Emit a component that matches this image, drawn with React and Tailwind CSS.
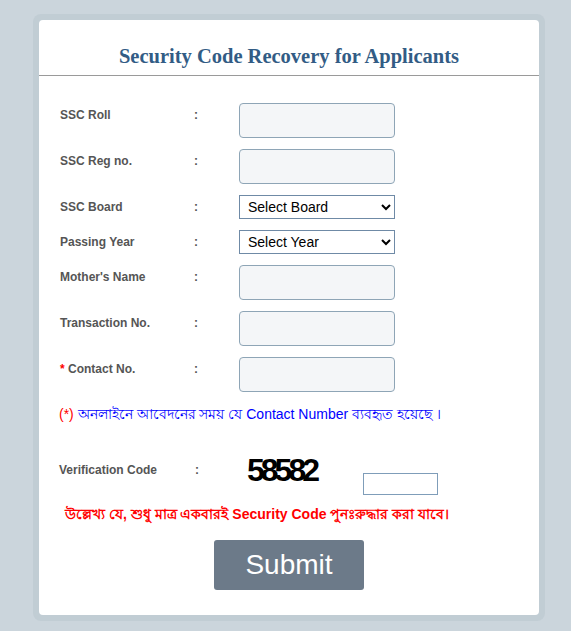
import React from "react";

const ROWS = [
  { label: "SSC Roll", type: "text" },
  { label: "SSC Reg no.", type: "text" },
  { label: "SSC Board", type: "select", placeholder: "Select Board" },
  { label: "Passing Year", type: "select", placeholder: "Select Year" },
  { label: "Mother's Name", type: "text" },
  { label: "Transaction No.", type: "text" },
  { label: "Contact No.", type: "text", required: true },
];

function Field({ row }) {
  if (row.type === "select") {
    return (
      <select className="w-[156px] h-6 border border-[#6f8aa6] bg-white text-[14px] text-black px-[4px] rounded-none">
        <option>{row.placeholder}</option>
      </select>
    );
  }
  return (
    <input
      type="text"
      className="w-[156px] h-[35px] rounded-[4px] border border-[#8ea5b6] bg-[#f4f6f8] px-2 text-sm outline-none"
    />
  );
}

export default function App() {
  return (
    <div
      className="min-h-screen bg-[#cbd5dc] pt-[14px] pl-[33px]"
      style={{ fontFamily: '"Liberation Sans", Arial, sans-serif' }}
    >
      <div className="w-[512px] h-[607px] rounded-lg bg-[#c1cdd4] p-[6px]">
        <div className="h-full rounded-[4px] bg-white">
          {/* titulo */}
          <div className="pt-[22px] pb-[5px] border-b border-[#9a9a9a] text-center">
            <h1
              className="text-[20.5px] leading-[28px] font-semibold text-[#325c85]"
              style={{ fontFamily: '"Liberation Serif", "DejaVu Serif", serif' }}
            >
              Security Code Recovery for Applicants
            </h1>
          </div>

          <div className="pt-[27px] pl-[21px]">
            <div className="flex flex-col gap-[11px]">
              {ROWS.map((r) => (
                <div key={r.label} className="flex items-start">
                  <div className="w-[134px] leading-6 text-[12px] font-bold text-[#555]">
                    {r.required && <span className="text-[#ff0000]">* </span>}
                    {r.label}
                  </div>
                  <div className="w-[45px] leading-6 text-[12px] font-bold text-[#555]">:</div>
                  <Field row={r} />
                </div>
              ))}
            </div>

            <p className="mt-[12px] text-[14px] leading-5 text-[#0000ff] -ml-[1px]">
              <span className="text-[#ff0000]">(*)</span> অনলাইনে আবেদনের সময় যে Contact Number ব্যবহৃত হয়েছে ।
            </p>

            {/* verificacion */}
            <div className="mt-[34px] flex items-start -ml-[1px]">
              <div className="w-[136px] leading-6 text-[12px] font-bold text-[#555]">
                Verification Code
              </div>
              <div className="w-[52px] leading-6 text-[12px] font-bold text-[#555]">:</div>
              <div className="w-[116px] leading-6 text-[32px] font-bold tracking-[-4px] text-black">
                58582
              </div>
              <input
                type="text"
                className="mt-[15px] w-[75px] h-[22px] border border-[#7f9db9] bg-white outline-none"
              />
            </div>

            <p className="mt-[9px] ml-[5px] text-[14px] leading-5 font-bold text-[#ff0000]">
              উল্লেখ্য যে, শুধু মাত্র একবারই Security Code পুনঃরুদ্ধার করা যাবে।
            </p>
          </div>

          <div className="mt-[16px] flex justify-center">
            <button className="w-[150px] h-[50px] rounded-[3px] bg-[#6c7a89] text-white text-[28px]">
              Submit
            </button>
          </div>
        </div>
      </div>
    </div>
  );
}
